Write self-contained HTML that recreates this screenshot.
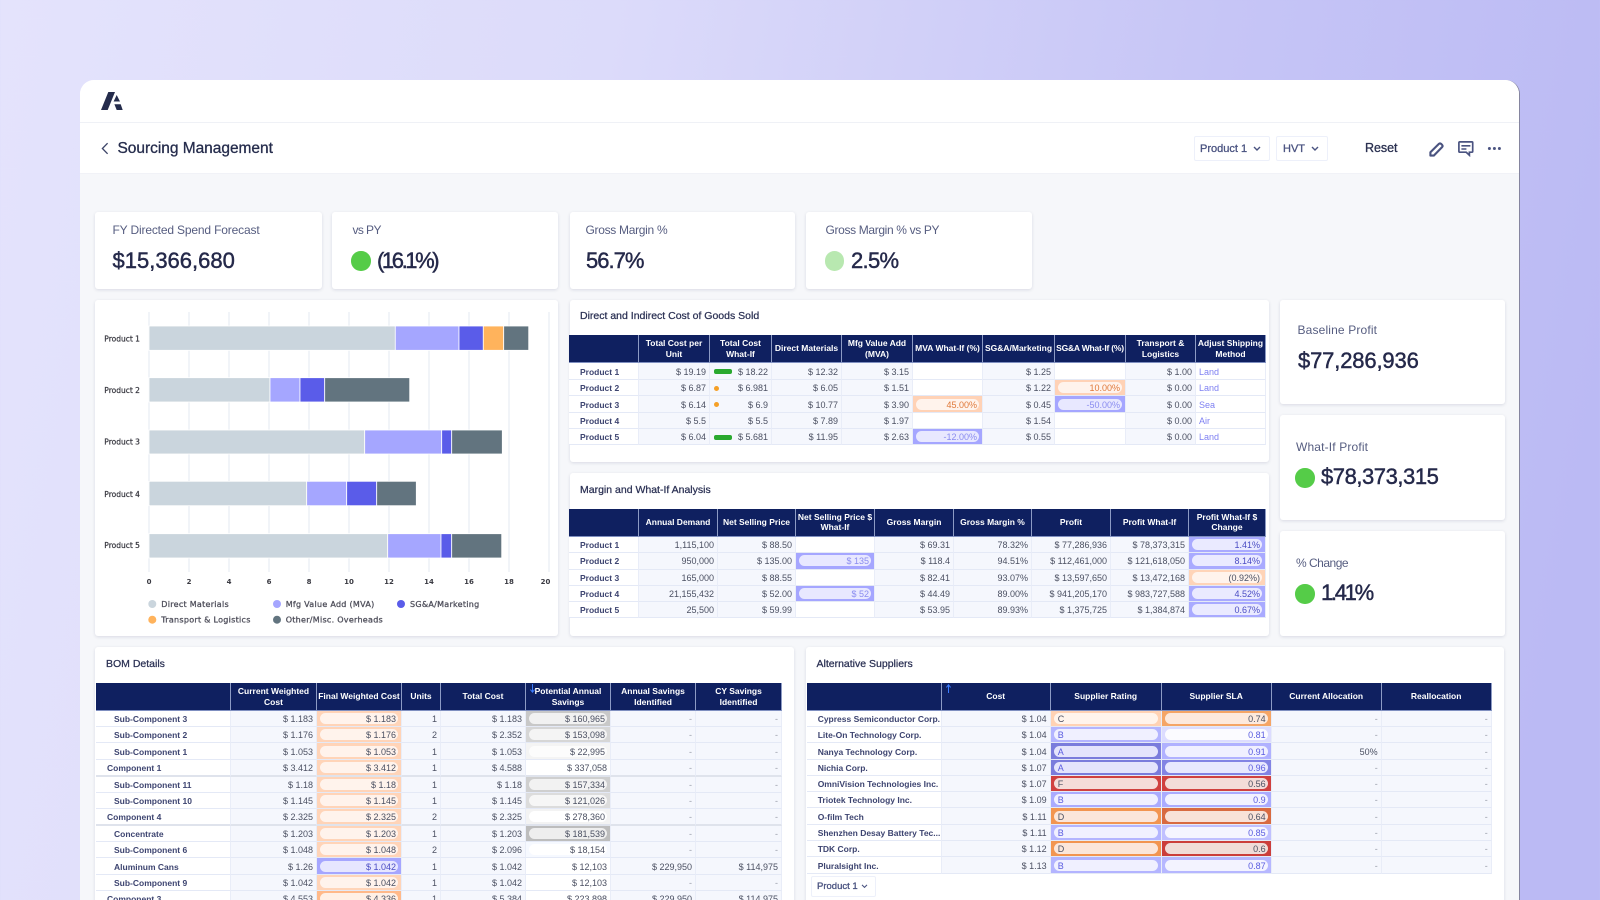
<!DOCTYPE html>
<html lang="en"><head><meta charset="utf-8"><title>Sourcing Management</title>
<style>
*{box-sizing:border-box}
html,body{margin:0;padding:0;width:1600px;height:900px;overflow:hidden;font-family:"Liberation Sans",sans-serif}
body{background:linear-gradient(100deg,#e4e3fc 0%,#dcdbfa 35%,#c6c5f6 70%,#bbbaf4 95%);position:relative}
.frame{position:absolute;left:80px;top:80px;width:1440px;height:820px;background:#f6f7fa;border-radius:14px 14px 0 0;overflow:hidden;border-right:1px solid #85859f}
.top{position:absolute;left:80px;top:80px;width:1439px;height:93px;background:#fff;border-radius:14px 14px 0 0;box-shadow:0 1px 0 #f1f2f7}
.top:before{content:"";position:absolute;left:0;right:0;top:42px;height:1px;background:#eff1f6}
.a{position:absolute;white-space:nowrap}
.card{position:absolute;background:#fff;border-radius:3px;box-shadow:0 1px 3px rgba(40,50,90,.14)}
.l{position:absolute;font-size:12px;line-height:16px;letter-spacing:.15px;color:#565d80;white-space:nowrap}
.v{position:absolute;font-size:22px;line-height:28px;color:#25294a;-webkit-text-stroke:.45px #25294a;white-space:nowrap}
.dot{position:absolute;width:19.5px;height:19.5px;border-radius:50%;background:#55cc48}
.dd{position:absolute;height:25px;background:#fff;border:1px solid #edf0fa;border-radius:2px;font-size:11px;line-height:25px;color:#4a5380;-webkit-text-stroke:.3px #4a5380}
.ttl{position:absolute;font-size:10.5px;line-height:14px;color:#2b3154;-webkit-text-stroke:.25px #2b3154;white-space:nowrap}
table{position:absolute;table-layout:fixed;border-collapse:separate;border-spacing:0;font-size:9px;color:#4b5062;filter:blur(.3px)}
th{background:#0f2060;color:#fff;font-size:8.5px;line-height:10.5px;font-weight:bold;padding:0 1px;text-align:center;border-right:1px solid #8d9bc4;border-bottom:1px solid #7f8fc0;position:relative;overflow:hidden}
td{padding:1px 3px 0;height:16px;text-align:right;background:#f5f7fd;border-bottom:1px solid #e4e9f6;border-right:1px solid #e9edf8;white-space:nowrap;overflow:hidden;line-height:14px;position:relative}
tr.t td{height:17px}
td.n{text-align:left;background:#fff;font-weight:bold;font-size:8.5px;color:#3d4470;padding-left:11px;text-overflow:clip}
td.s{padding-left:18px}
td.w{background:#fff}
td.k{text-align:left;color:#7f81f2;background:#fff}
td.d{color:#9a9eaa}
td.p{padding:0}
td.p span{display:block;margin:2px 3px;height:11px;line-height:12px;border-radius:6px;padding:0 2px;text-align:right}
td.lf span{text-align:left;padding-left:4px}
tr.x td{border-bottom:2px solid #dfe3ec}
.o{background:#ffd2b6}.o span{background:#fff3ec;color:#e0793a}
.b{background:#a5a6ff}.b span{background:#e8e8ff;color:#8a8cf0}
.oo{background:#ffd4b8}.oo span{background:#fff3ec;color:#4b5062}
.bb{background:#a5a6ff}.bb span{background:#e6e6ff;color:#4a4cc4}
td.pc{background:#a9aaff}td.pc span{background:#eaeaff;color:#4a4cc4}
td.g{color:#4b5062}
.spark{position:absolute;left:4px;top:6px;width:18px;height:4.5px;border-radius:2px;background:#2aa92f}
.sd{position:absolute;left:3.5px;top:5.5px;width:5.5px;height:5.5px;border-radius:50%;background:#f5a027}
td.r{color:#5a5ce0}
svg text{font-family:"DejaVu Sans",sans-serif}
</style></head><body>
<div class="frame"></div>
<div class="top"></div>

<svg class="a" style="left:101px;top:92px" width="22" height="19" viewBox="0 0 22 19"><path fill="#252c4c" d="M0 18L7.3 0H14L6.7 18ZM15.7 3L19 9.5H12.6ZM13.4 12.3H19.7L21.7 18H15.7Z"/></svg>
<svg class="a" style="left:101px;top:141.5px" width="8" height="13" viewBox="0 0 8 13"><path d="M6.6 1.2L1.4 6.5l5.2 5.3" fill="none" stroke="#3c4468" stroke-width="1.3"/></svg>
<div class="a" style="left:117.5px;top:139px;font-size:15.5px;line-height:20px;letter-spacing:-.03px;color:#252c4c;-webkit-text-stroke:.3px #252c4c">Sourcing Management</div>

<div class="dd" style="left:1194px;top:136px;width:76px;padding-left:5px">Product 1<svg class="a" style="left:58px;top:9px" width="8" height="6" viewBox="0 0 8 6"><path d="M1 1l3 3 3-3" fill="none" stroke="#4a5380" stroke-width="1.4"/></svg></div>
<div class="dd" style="left:1276px;top:136px;width:52px;padding-left:6px">HVT<svg class="a" style="left:34px;top:9px" width="8" height="6" viewBox="0 0 8 6"><path d="M1 1l3 3 3-3" fill="none" stroke="#4a5380" stroke-width="1.4"/></svg></div>
<div class="a" style="left:1365px;top:140px;font-size:12.5px;line-height:17px;letter-spacing:-.05px;color:#2a3050;-webkit-text-stroke:.3px #2a3050">Reset</div>
<svg class="a" style="left:1429px;top:141.5px" width="15" height="15" viewBox="0 0 15 15"><path d="M1.4 13.6V10.2L10 1.8Q11 1 12 1.8L13.2 3Q14 4 13.2 5L4.8 13.6Z" fill="none" stroke="#4a5380" stroke-width="2.1" stroke-linejoin="round"/></svg>
<svg class="a" style="left:1458px;top:141px" width="16" height="16" viewBox="0 0 16 16"><path d="M1.7 .9H13.9Q14.7 .9 14.7 1.7V10.4Q14.7 11.2 13.9 11.2H11.4V14.2L8.2 11.2H1.7Q.9 11.2 .9 10.4V1.7Q.9 .9 1.7 .9Z" fill="none" stroke="#4a5380" stroke-width="1.7"/><path d="M3.4 4.8H12.4M3.4 8H8.4" stroke="#4a5380" stroke-width="1.6"/></svg>
<svg class="a" style="left:1487px;top:146px" width="14" height="5" viewBox="0 0 14 5"><circle cx="2.4" cy="2.5" r="1.5" fill="#4a5380"/><circle cx="7.4" cy="2.5" r="1.5" fill="#4a5380"/><circle cx="12.4" cy="2.5" r="1.5" fill="#4a5380"/></svg>

<!-- KPI row -->
<div class="card" style="left:95px;top:212px;width:226.5px;height:77px"></div>
<div class="card" style="left:332px;top:212px;width:226px;height:77px"></div>
<div class="card" style="left:569.5px;top:212px;width:225.5px;height:77px"></div>
<div class="card" style="left:806px;top:212px;width:225.5px;height:77px"></div>
<div class="l" style="left:112.5px;top:222px;letter-spacing:-.16px">FY Directed Spend Forecast</div>
<div class="v" style="left:112.5px;top:247px">$15,366,680</div>
<div class="l" style="left:352.5px;top:222px;letter-spacing:-.6px">vs PY</div>
<div class="dot" style="left:351px;top:251px"></div>
<div class="v" style="left:377px;top:247px;letter-spacing:-2.4px">(16.1%)</div>
<div class="l" style="left:585.5px;top:222px;letter-spacing:-.3px">Gross Margin %</div>
<div class="v" style="left:586px;top:247px;letter-spacing:-1px">56.7%</div>
<div class="l" style="left:825.5px;top:222px;letter-spacing:-.35px">Gross Margin % vs PY</div>
<div class="dot" style="left:824.5px;top:251px;background:#b8e8b0"></div>
<div class="v" style="left:851px;top:247px;letter-spacing:-.7px">2.5%</div>

<!-- Chart -->
<div class="card" style="left:95px;top:300px;width:463px;height:336px"></div>
<svg class="a" style="left:95px;top:300px;filter:blur(.25px)" width="463" height="336" viewBox="95 300 463 336">
<g stroke="#e3e8f0" stroke-width="1"><path d="M149 312V572M189 312V572M229 312V572M269 312V572M309 312V572M349 312V572M389 312V572M429 312V572M469 312V572M509 312V572M549 312V572"/></g>
<g stroke="#fff" stroke-width=".8">
<rect x="149" y="326" width="246.3" height="24.3" fill="#cad5dd"/><rect x="395.3" y="326" width="63.7" height="24.3" fill="#a5a6ff"/><rect x="459" y="326" width="24.3" height="24.3" fill="#5a5ce9"/><rect x="483.3" y="326" width="20.4" height="24.3" fill="#ffb35c"/><rect x="503.7" y="326" width="25" height="24.3" fill="#62747f"/>
<rect x="149" y="377.7" width="121" height="24.3" fill="#cad5dd"/><rect x="270" y="377.7" width="30" height="24.3" fill="#a5a6ff"/><rect x="300" y="377.7" width="24.7" height="24.3" fill="#5a5ce9"/><rect x="324.7" y="377.7" width="85" height="24.3" fill="#62747f"/>
<rect x="149" y="430" width="215.7" height="24" fill="#cad5dd"/><rect x="364.7" y="430" width="77" height="24" fill="#a5a6ff"/><rect x="441.7" y="430" width="10" height="24" fill="#5a5ce9"/><rect x="451.7" y="430" width="50.6" height="24" fill="#62747f"/>
<rect x="149" y="481.3" width="157.7" height="24.4" fill="#cad5dd"/><rect x="306.7" y="481.3" width="40" height="24.4" fill="#a5a6ff"/><rect x="346.7" y="481.3" width="30" height="24.4" fill="#5a5ce9"/><rect x="376.7" y="481.3" width="39.6" height="24.4" fill="#62747f"/>
<rect x="149" y="533.7" width="238.7" height="24.3" fill="#cad5dd"/><rect x="387.7" y="533.7" width="53.3" height="24.3" fill="#a5a6ff"/><rect x="441" y="533.7" width="10.7" height="24.3" fill="#5a5ce9"/><rect x="451.7" y="533.7" width="50" height="24.3" fill="#62747f"/>
</g>
<g font-size="7.5" fill="#3a3a42" stroke="#3a3a42" stroke-width=".25">
<text x="104.3" y="341.5">Product 1</text><text x="104.3" y="393">Product 2</text><text x="104.3" y="444.5">Product 3</text><text x="104.3" y="497">Product 4</text><text x="104.3" y="548">Product 5</text>
</g>
<g font-size="7" font-weight="bold" fill="#3a3a42" text-anchor="middle">
<text x="149" y="584">0</text><text x="189" y="584">2</text><text x="229" y="584">4</text><text x="269" y="584">6</text><text x="309" y="584">8</text><text x="349" y="584">10</text><text x="389" y="584">12</text><text x="429" y="584">14</text><text x="469" y="584">16</text><text x="509" y="584">18</text><text x="545.5" y="584">20</text>
</g>
<circle cx="152.3" cy="604" r="4" fill="#cad5dd"/><circle cx="277" cy="604" r="4" fill="#a5a6ff"/><circle cx="401" cy="604" r="4" fill="#5a5ce9"/><circle cx="152.3" cy="619.7" r="4" fill="#ffb35c"/><circle cx="277" cy="619.7" r="4" fill="#62747f"/>
<g font-size="8" fill="#50505c" stroke="#50505c" stroke-width=".3" letter-spacing=".28">
<text x="161.3" y="607">Direct Materials</text><text x="285.7" y="607">Mfg Value Add (MVA)</text><text x="410" y="607">SG&amp;A/Marketing</text><text x="161.3" y="622.7">Transport &amp; Logistics</text><text x="285.7" y="622.7">Other/Misc. Overheads</text>
</g>
</svg>

<!-- COGS -->
<div class="card" style="left:569.5px;top:300px;width:699.5px;height:162px"></div>
<div class="ttl" style="left:580px;top:309px">Direct and Indirect Cost of Goods Sold</div>
<table style="left:569px;top:335px;width:697px">
<colgroup><col style="width:70px"><col style="width:71px"><col style="width:62px"><col style="width:70px"><col style="width:71px"><col style="width:70px"><col style="width:72px"><col style="width:71px"><col style="width:70px"><col style="width:70px"></colgroup>
<tr style="height:28px"><th></th><th>Total Cost per Unit</th><th>Total Cost What-If</th><th>Direct Materials</th><th>Mfg Value Add (MVA)</th><th>MVA What-If (%)</th><th>SG&amp;A/Marketing</th><th style="white-space:nowrap;letter-spacing:-.2px">SG&amp;A What-If (%)</th><th>Transport &amp; Logistics</th><th>Adjust Shipping Method</th></tr>
<tr class="t"><td class="n">Product 1</td><td>$ 19.19</td><td><i class="spark"></i>$ 18.22</td><td>$ 12.32</td><td>$ 3.15</td><td class="w"></td><td>$ 1.25</td><td class="w"></td><td>$ 1.00</td><td class="k">Land</td></tr>
<tr><td class="n">Product 2</td><td>$ 6.87</td><td><i class="sd"></i>$ 6.981</td><td>$ 6.05</td><td>$ 1.51</td><td class="w"></td><td>$ 1.22</td><td class="p o"><span>10.00%</span></td><td>$ 0.00</td><td class="k">Land</td></tr>
<tr class="t"><td class="n">Product 3</td><td>$ 6.14</td><td><i class="sd"></i>$ 6.9</td><td>$ 10.77</td><td>$ 3.90</td><td class="p o"><span>45.00%</span></td><td>$ 0.45</td><td class="p b"><span>-50.00%</span></td><td>$ 0.00</td><td class="k">Sea</td></tr>
<tr><td class="n">Product 4</td><td>$ 5.5</td><td>$ 5.5</td><td>$ 7.89</td><td>$ 1.97</td><td class="w"></td><td>$ 1.54</td><td class="w"></td><td>$ 0.00</td><td class="k">Air</td></tr>
<tr><td class="n">Product 5</td><td>$ 6.04</td><td><i class="spark"></i>$ 5.681</td><td>$ 11.95</td><td>$ 2.63</td><td class="p b"><span>-12.00%</span></td><td>$ 0.55</td><td class="w"></td><td>$ 0.00</td><td class="k">Land</td></tr>
</table>

<!-- Margin -->
<div class="card" style="left:569.5px;top:473px;width:699.5px;height:163px"></div>
<div class="ttl" style="left:580px;top:483px">Margin and What-If Analysis</div>
<table style="left:569px;top:508.5px;width:697px">
<colgroup><col style="width:70px"><col style="width:79px"><col style="width:78px"><col style="width:79px"><col style="width:79px"><col style="width:78px"><col style="width:79px"><col style="width:78px"><col style="width:77px"></colgroup>
<tr style="height:28px"><th></th><th>Annual Demand</th><th>Net Selling Price</th><th>Net Selling Price $ What-If</th><th>Gross Margin</th><th>Gross Margin %</th><th>Profit</th><th>Profit What-If</th><th>Profit What-If $ Change</th></tr>
<tr><td class="n">Product 1</td><td>1,115,100</td><td>$ 88.50</td><td class="w"></td><td>$ 69.31</td><td>78.32%</td><td>$ 77,286,936</td><td>$ 78,373,315</td><td class="p pc"><span>1.41%</span></td></tr>
<tr class="t"><td class="n">Product 2</td><td>950,000</td><td>$ 135.00</td><td class="p b"><span>$ 135</span></td><td>$ 118.4</td><td>94.51%</td><td>$ 112,461,000</td><td>$ 121,618,050</td><td class="p pc"><span>8.14%</span></td></tr>
<tr><td class="n">Product 3</td><td>165,000</td><td>$ 88.55</td><td class="w"></td><td>$ 82.41</td><td>93.07%</td><td>$ 13,597,650</td><td>$ 13,472,168</td><td class="p oo"><span>(0.92%)</span></td></tr>
<tr><td class="n">Product 4</td><td>21,155,432</td><td>$ 52.00</td><td class="p b"><span>$ 52</span></td><td>$ 44.49</td><td>89.00%</td><td>$ 941,205,170</td><td>$ 983,727,588</td><td class="p pc"><span>4.52%</span></td></tr>
<tr><td class="n">Product 5</td><td>25,500</td><td>$ 59.99</td><td class="w"></td><td>$ 53.95</td><td>89.93%</td><td>$ 1,375,725</td><td>$ 1,384,874</td><td class="p pc"><span>0.67%</span></td></tr>
</table>

<!-- Right KPIs -->
<div class="card" style="left:1279.5px;top:300px;width:225.5px;height:104px"></div>
<div class="card" style="left:1279.5px;top:415px;width:225.5px;height:105px"></div>
<div class="card" style="left:1279.5px;top:531px;width:225.5px;height:105px"></div>
<div class="l" style="left:1297.5px;top:322px">Baseline Profit</div>
<div class="v" style="left:1298px;top:346.5px;letter-spacing:-.15px">$77,286,936</div>
<div class="l" style="left:1296px;top:439px">What-If Profit</div>
<div class="dot" style="left:1295px;top:468px"></div>
<div class="v" style="left:1321px;top:463px;letter-spacing:-.45px">$78,373,315</div>
<div class="l" style="left:1296px;top:555px;letter-spacing:-.5px">% Change</div>
<div class="dot" style="left:1295px;top:584px"></div>
<div class="v" style="left:1321px;top:579px;letter-spacing:-2.3px">1.41%</div>

<!-- BOM -->
<div class="card" style="left:95px;top:647px;width:699px;height:270px"></div>
<div class="ttl" style="left:106px;top:657px">BOM Details</div>
<table style="left:96px;top:683px;width:686px">
<colgroup><col style="width:135px"><col style="width:86px"><col style="width:85px"><col style="width:39px"><col style="width:85px"><col style="width:85px"><col style="width:85px"><col style="width:86px"></colgroup>
<tr style="height:28px"><th></th><th>Current Weighted Cost</th><th>Final Weighted Cost</th><th>Units</th><th>Total Cost</th><th><svg class="a" style="left:4px;top:1px" width="5" height="9" viewBox="0 0 5 9"><path d="M2.5 0V8M.4 5.6L2.5 8.2 4.6 5.6" fill="none" stroke="#3b7cff" stroke-width="1"/></svg>Potential Annual Savings</th><th>Annual Savings Identified</th><th>CY Savings Identified</th></tr>
<tr><td class="n s">Sub-Component 3</td><td>$ 1.183</td><td class="p oo"><span>$ 1.183</span></td><td>1</td><td>$ 1.183</td><td class="p g" style="background:#c8c8c8"><span style="background:#f1f1f1">$ 160,965</span></td><td class="d">-</td><td class="d">-</td></tr>
<tr><td class="n s">Sub-Component 2</td><td>$ 1.176</td><td class="p oo"><span>$ 1.176</span></td><td>2</td><td>$ 2.352</td><td class="p g" style="background:#d6d6d6"><span style="background:#f4f4f4">$ 153,098</span></td><td class="d">-</td><td class="d">-</td></tr>
<tr class="t"><td class="n s">Sub-Component 1</td><td>$ 1.053</td><td class="p oo"><span>$ 1.053</span></td><td>1</td><td>$ 1.053</td><td class="p g" style="background:#f4f4f4"><span style="background:#fcfcfc">$ 22,995</span></td><td class="d">-</td><td class="d">-</td></tr>
<tr class="x"><td class="n">Component 1</td><td>$ 3.412</td><td class="p oo"><span>$ 3.412</span></td><td>1</td><td>$ 4.588</td><td class="w">$ 337,058</td><td class="d">-</td><td class="d">-</td></tr>
<tr><td class="n s">Sub-Component 11</td><td>$ 1.18</td><td class="p oo"><span>$ 1.18</span></td><td>1</td><td>$ 1.18</td><td class="p g" style="background:#cfcfcf"><span style="background:#f2f2f2">$ 157,334</span></td><td class="d">-</td><td class="d">-</td></tr>
<tr><td class="n s">Sub-Component 10</td><td>$ 1.145</td><td class="p oo"><span>$ 1.145</span></td><td>1</td><td>$ 1.145</td><td class="p g" style="background:#dcdcdc"><span style="background:#f6f6f6">$ 121,026</span></td><td class="d">-</td><td class="d">-</td></tr>
<tr class="x"><td class="n">Component 4</td><td>$ 2.325</td><td class="p oo"><span>$ 2.325</span></td><td>2</td><td>$ 2.325</td><td class="p g" style="background:#f3f3f3"><span style="background:#fff">$ 278,360</span></td><td class="d">-</td><td class="d">-</td></tr>
<tr><td class="n s">Concentrate</td><td>$ 1.203</td><td class="p oo"><span>$ 1.203</span></td><td>1</td><td>$ 1.203</td><td class="p g" style="background:#bdbdbd"><span style="background:#eee">$ 181,539</span></td><td class="d">-</td><td class="d">-</td></tr>
<tr><td class="n s">Sub-Component 6</td><td>$ 1.048</td><td class="p oo"><span>$ 1.048</span></td><td>2</td><td>$ 2.096</td><td class="p g" style="background:#f6f9ff"><span style="background:#fff">$ 18,154</span></td><td class="d">-</td><td class="d">-</td></tr>
<tr class="t"><td class="n s">Aluminum Cans</td><td>$ 1.26</td><td class="p bb"><span>$ 1.042</span></td><td>1</td><td>$ 1.042</td><td class="w">$ 12,103</td><td>$ 229,950</td><td>$ 114,975</td></tr>
<tr><td class="n s">Sub-Component 9</td><td>$ 1.042</td><td class="p oo"><span>$ 1.042</span></td><td>1</td><td>$ 1.042</td><td class="w">$ 12,103</td><td class="d">-</td><td class="d">-</td></tr>
<tr><td class="n">Component 3</td><td>$ 4.553</td><td class="p" style="background:#ffb98a"><span style="background:#fff0e6">$ 4.336</span></td><td>1</td><td>$ 5.384</td><td class="w">$ 223,898</td><td>$ 229,950</td><td>$ 114,975</td></tr>
</table>

<!-- Alternative Suppliers -->
<div class="card" style="left:806px;top:647px;width:698px;height:270px"></div>
<div class="ttl" style="left:816.5px;top:657px">Alternative Suppliers</div>
<table style="left:806.7px;top:683px;width:685px">
<colgroup><col style="width:135px"><col style="width:109px"><col style="width:111px"><col style="width:110px"><col style="width:110px"><col style="width:110px"></colgroup>
<tr style="height:28px"><th></th><th><svg class="a" style="left:4px;top:1px" width="5" height="9" viewBox="0 0 5 9"><path d="M2.5 9V1M.4 3.4L2.5 .8 4.6 3.4" fill="none" stroke="#3b7cff" stroke-width="1"/></svg>Cost</th><th>Supplier Rating</th><th>Supplier SLA</th><th>Current Allocation</th><th>Reallocation</th></tr>
<tr><td class="n">Cypress Semiconductor Corp.</td><td>$ 1.04</td><td class="p lf" style="background:#ffd2b4"><span style="background:#fff4ec">C</span></td><td class="p" style="background:#f5a566"><span style="background:#fde9dd">0.74</span></td><td class="d">-</td><td class="d">-</td></tr>
<tr><td class="n">Lite-On Technology Corp.</td><td>$ 1.04</td><td class="p lf r" style="background:#b3b4ff"><span style="background:#f0f0ff">B</span></td><td class="p r" style="background:#dcdcff"><span style="background:#fbfbff">0.81</span></td><td class="d">-</td><td class="d">-</td></tr>
<tr class="t"><td class="n">Nanya Technology Corp.</td><td>$ 1.04</td><td class="p lf r" style="background:#7a7cdc"><span style="background:#e4e4fc">A</span></td><td class="p r" style="background:#b0b1ff"><span style="background:#f0f0ff">0.91</span></td><td>50%</td><td class="d">-</td></tr>
<tr><td class="n">Nichia Corp.</td><td>$ 1.07</td><td class="p lf r" style="background:#7a7cdc"><span style="background:#e4e4fc">A</span></td><td class="p r" style="background:#8283e4"><span style="background:#e8e8fe">0.96</span></td><td class="d">-</td><td class="d">-</td></tr>
<tr><td class="n">OmniVision Technologies Inc.</td><td>$ 1.07</td><td class="p lf" style="background:#d0403f"><span style="background:#f5dcd9">F</span></td><td class="p" style="background:#d0403f"><span style="background:#f3dcd9">0.56</span></td><td class="d">-</td><td class="d">-</td></tr>
<tr><td class="n">Triotek Technology Inc.</td><td>$ 1.09</td><td class="p lf r" style="background:#aaabff"><span style="background:#f0f0ff">B</span></td><td class="p r" style="background:#aaabff"><span style="background:#f2f2ff">0.9</span></td><td class="d">-</td><td class="d">-</td></tr>
<tr class="t"><td class="n">O-film Tech</td><td>$ 1.11</td><td class="p lf" style="background:#f29550"><span style="background:#fbe6da">D</span></td><td class="p" style="background:#d86a40"><span style="background:#f8e2d8">0.64</span></td><td class="d">-</td><td class="d">-</td></tr>
<tr><td class="n">Shenzhen Desay Battery Tec...</td><td>$ 1.11</td><td class="p lf r" style="background:#b3b4ff"><span style="background:#f0f0ff">B</span></td><td class="p r" style="background:#c0c0ff"><span style="background:#f5f5ff">0.85</span></td><td class="d">-</td><td class="d">-</td></tr>
<tr><td class="n">TDK Corp.</td><td>$ 1.12</td><td class="p lf" style="background:#f29550"><span style="background:#fbe6da">D</span></td><td class="p" style="background:#cb3e3b"><span style="background:#f0dcd8">0.6</span></td><td class="d">-</td><td class="d">-</td></tr>
<tr class="t"><td class="n">Pluralsight Inc.</td><td>$ 1.13</td><td class="p lf r" style="background:#b3b4ff"><span style="background:#f0f0ff">B</span></td><td class="p r" style="background:#b6b7ff"><span style="background:#f3f3ff">0.87</span></td><td class="d">-</td><td class="d">-</td></tr>
</table>
<div class="dd" style="left:811px;top:876px;width:65px;height:21px;line-height:20px;font-size:9.5px;padding-left:5px">Product 1<svg class="a" style="left:49px;top:7px" width="7" height="5" viewBox="0 0 8 6"><path d="M1 1l3 3 3-3" fill="none" stroke="#4a5380" stroke-width="1.3"/></svg></div>
</body></html>
